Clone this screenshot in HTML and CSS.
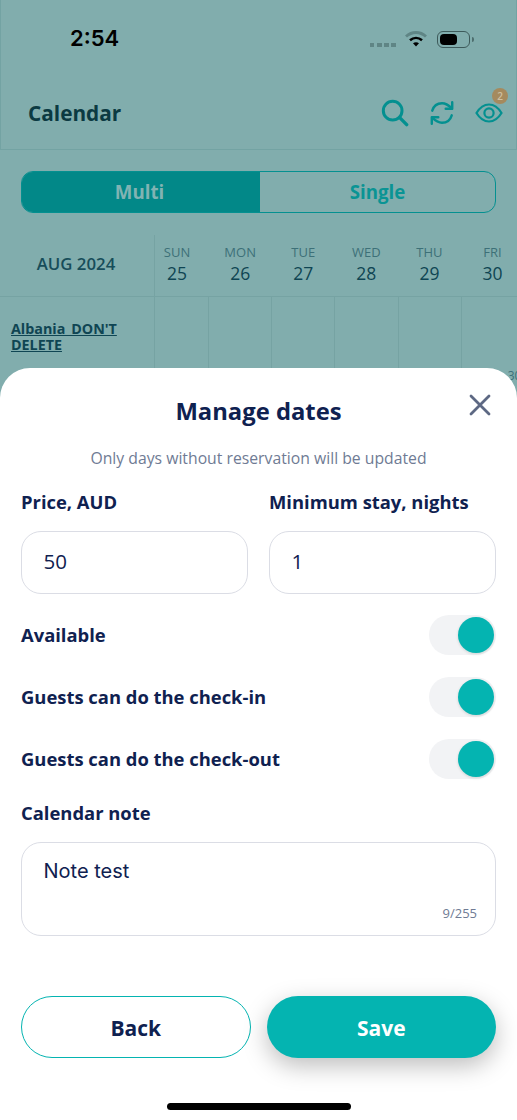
FILE: index.html
```html
<!DOCTYPE html>
<html lang="en">
<head>
<meta charset="utf-8">
<title>Manage dates</title>
<link rel="stylesheet" href="styles.css">
</head>
<body>
<div class="screen">
  <header class="top">
    <div class="status">
      <span class="time">2:54</span>
      <div class="status-icons">
        <span class="signal"><i></i><i></i><i></i><i></i></span>
        <svg class="wifi" viewBox="0 0 24 18" width="24" height="18"><path d="M2 6.5C8 1.2 16 1.2 22 6.5" fill="none" stroke="#5f8585" stroke-width="3"/><path d="M6 10.2C9.6 7.2 14.4 7.2 18 10.2" fill="none" stroke="#000" stroke-width="2.6"/><path d="M9 13.2C10.8 11.8 13.2 11.8 15 13.2L12 16.5Z" fill="#000"/></svg>
        <span class="battery"><span class="charge"></span></span><span class="nub"></span>
      </div>
    </div>
    <div class="nav">
      <h1>Calendar</h1>
      <div class="nav-icons">
        <svg viewBox="0 0 30 30" width="28" height="28"><circle cx="12.5" cy="12.5" r="10" fill="none" stroke="#049090" stroke-width="3.2"/><path d="M20 20L27.5 27.5" stroke="#049090" stroke-width="3.6" stroke-linecap="round"/></svg>
        <svg viewBox="0 0 28 28" width="26" height="26" fill="none" stroke="#049090" stroke-width="2.6" stroke-linecap="round" stroke-linejoin="round"><path d="M3.5 11.5C5 6.5 9 3.5 14 3.5C18 3.5 21 5.5 24.5 9"/><path d="M25 2.5V9.5H18"/><path d="M24.5 16.5C23 21.5 19 24.5 14 24.5C10 24.5 7 22.5 3.5 19"/><path d="M3 25.5V18.5H10"/></svg>
        <span class="eye">
          <svg viewBox="0 0 28 20" width="28" height="20" fill="none" stroke="#049090" stroke-width="2.2"><path d="M1.5 10C5 4.2 9.2 1.5 14 1.5C18.8 1.5 23 4.2 26.5 10C23 15.8 18.8 18.5 14 18.5C9.2 18.5 5 15.8 1.5 10Z"/><circle cx="14" cy="10" r="4.6"/></svg>
          <b class="badge">2</b>
        </span>
      </div>
    </div>
  </header>

  <div class="segment">
    <span class="seg-on">Multi</span>
    <span class="seg-off">Single</span>
  </div>

  <div class="cal-head">
    <div class="month">AUG 2024</div>
    <div class="days">
      <div class="day"><span>SUN</span><strong>25</strong></div>
      <div class="day"><span>MON</span><strong>26</strong></div>
      <div class="day"><span>TUE</span><strong>27</strong></div>
      <div class="day"><span>WED</span><strong>28</strong></div>
      <div class="day"><span>THU</span><strong>29</strong></div>
      <div class="day"><span>FRI</span><strong>30</strong></div>
    </div>
  </div>
  <div class="cal-row">
    <a class="listing">Albania_DON'T DELETE</a>
    <div class="cell c1"></div>
    <div class="cell"></div>
    <div class="cell"></div>
    <div class="cell"></div>
    <div class="cell"></div>
    <div class="cell last"><span class="peek">30</span></div>
  </div>

  <section class="sheet">
    <h2>Manage dates</h2>
    <svg class="close" viewBox="0 0 22 22" width="22" height="22"><path d="M2 2L20 20M20 2L2 20" stroke="#5d6883" stroke-width="2.8" stroke-linecap="round"/></svg>
    <p class="sub">Only days without reservation will be updated</p>

    <div class="fields">
      <div class="field">
        <label class="label">Price, AUD</label>
        <div class="input">50</div>
      </div>
      <div class="field">
        <label class="label">Minimum stay, nights</label>
        <div class="input">1</div>
      </div>
    </div>

    <div class="toggle-row first"><span class="label">Available</span><span class="toggle"><i></i></span></div>
    <div class="toggle-row"><span class="label">Guests can do the check-in</span><span class="toggle"><i></i></span></div>
    <div class="toggle-row"><span class="label">Guests can do the check-out</span><span class="toggle"><i></i></span></div>

    <div class="label note-label">Calendar note</div>
    <div class="note">
      <span class="note-text">Note test</span>
      <span class="count">9/255</span>
    </div>

    <div class="actions">
      <button class="btn back">Back</button>
      <button class="btn save">Save</button>
    </div>
    <div class="home"></div>
  </section>
</div>
</body>
</html>
```

FILE: styles.css
```css
* { box-sizing: border-box; }
html, body { margin: 0; padding: 0; }
body { font-family: "Open Sans", "Noto Sans", sans-serif; color: #0f2150; }
.screen { position: relative; width: 517px; height: 1120px; background: #81adad; overflow: hidden; }

.top { height: 150px; border: 1px solid #73a3a3; border-top: 0; }
.status { height: 76px; display: flex; justify-content: space-between; align-items: flex-start; }
.time { margin: 24px 0 0 69px; font: 600 22px/28px Inter, "Liberation Sans", sans-serif; color: #000; }
.status-icons { display: flex; align-items: center; margin: 30px 42px 0 0; }
.signal { display: flex; gap: 2.6px; margin: 12px 8px 0 0; }
.signal i { width: 4.6px; height: 4px; background: #5f8585; }
.wifi { margin-right: 9px; }
.battery { width: 33px; height: 17px; border: 1px solid #3d5a5a; border-radius: 6px; padding: 2px; display: block; }
.charge { display: block; width: 17px; height: 11px; background: #000; border-radius: 4px; }
.nub { width: 2px; height: 5px; background: #4d6e6e; margin-left: 2px; border-radius: 0 2px 2px 0; }

.nav { display: flex; justify-content: space-between; align-items: center; height: 73px; padding: 0 14px 0 27px; }
h1 { margin: 0; font-size: 20.8px; font-weight: 700; color: #0b3a42; }
.nav-icons { display: flex; align-items: center; gap: 20px; }
.eye { position: relative; display: block; width: 27px; height: 20px; }
.badge { position: absolute; top: -15px; left: 17px; width: 16px; height: 16px; border-radius: 50%; background: #a58a5e; color: #cfc0a2; font: 600 10px/16px "Open Sans", sans-serif; text-align: center; }

.segment { display: flex; height: 42px; margin: 21px 21px 0; border-radius: 12px; border: 1px solid #049090; overflow: hidden; font-size: 18.7px; line-height: 24px; font-weight: 700; }
.segment span { display: flex; align-items: center; justify-content: center; padding-bottom: 1px; }
.seg-on { width: 238px; padding-right: 3px; background: #028888; color: #81b3b3; }
.seg-off { flex: 1; color: #0a9494; }

.cal-head { display: flex; height: 62px; margin-top: 22px; border-bottom: 1px solid #76a3a3; }
.month { width: 155px; flex: none; border-right: 1px solid #76a3a3; display: flex; align-items: center; justify-content: center; font-size: 16.8px; font-weight: 600; color: #174d5a; padding: 0 2px 5px 0; }
.days { display: flex; margin-left: -9.5px; flex: none; }
.day { width: 63.1px; display: flex; flex-direction: column; align-items: center; padding-top: 8px; }
.day span { font-size: 13px; line-height: 19px; color: #3d7078; }
.day strong { font-size: 17.5px; line-height: 23px; font-weight: 500; color: #0f4553; }

.cal-row { display: flex; height: 100px; }
.listing { display: block; flex: none; width: 154px; padding: 24px 30px 0 11px; font-size: 14.3px; line-height: 16px; font-weight: 700; color: #0f4553; text-decoration: underline; }
.cell { width: 63.2px; border-left: 1px solid #76a3a3; position: relative; }
.c1 { width: 54px; }
.cell.last { flex: 1; overflow: hidden; }
.peek { position: absolute; top: 70px; left: 46px; font-size: 12px; color: #3d7078; }

.sheet { position: absolute; left: 0; top: 368px; width: 517px; height: 752px; background: #fff; border-radius: 30px 30px 0 0; padding: 0 21px; }
h2 { margin: 25px 0 0; text-align: center; font-size: 23.8px; line-height: 36px; font-weight: 700; color: #0f2150; }
.close { position: absolute; top: 26px; right: 26px; }
.sub { margin: 18px 0 0; text-align: center; font-size: 15.75px; line-height: 22px; color: #6f7b94; }
.label { font-size: 18.4px; line-height: 24px; font-weight: 700; color: #0f2150; }
.fields { display: flex; gap: 21px; margin-top: 21px; }
.field { flex: 1; min-width: 0; }
.field .label { display: block; white-space: nowrap; }
.input { height: 63px; margin-top: 17px; border: 1.5px solid #dbdde5; border-radius: 20px; padding: 0 0 3px 21.5px; display: flex; align-items: center; font-size: 20.5px; color: #0f2150; }
.toggle-row { display: flex; justify-content: space-between; align-items: center; height: 40px; margin-top: 22px; }
.toggle-row.first { margin-top: 21px; }
.toggle { width: 67px; height: 40px; border-radius: 20px; background: #f2f3f5; display: flex; align-items: center; justify-content: flex-end; padding-right: 2px; }
.toggle i { width: 36px; height: 36px; border-radius: 50%; background: #04b4b1; box-shadow: 0 1px 3px rgba(0,0,0,.14); }
.note-label { margin-top: 22px; }
.note { position: relative; height: 94px; margin-top: 17px; border: 1.5px solid #dbdde5; border-radius: 20px; padding: 13px 21.5px; font: 400 20px/30px Inter, "Liberation Sans", sans-serif; color: #0f2150; }
.note-text { display: block; font-size: 20px; }
.count { position: absolute; right: 18px; bottom: 14px; font: 400 13px/16px "Open Sans", sans-serif; color: #6f7b94; }
.actions { display: flex; gap: 16px; margin-top: 60px; }
.btn { flex: 0 0 calc(50% - 8px); height: 62px; padding: 1px 0 0; border-radius: 31px; font: 700 21px "Open Sans", sans-serif; }
.back { background: #fff; border: 1.7px solid #04b4b1; color: #0f2150; }
.save { background: #04b4b1; border: 0; color: #fff; box-shadow: 0 8px 24px rgba(0,0,0,.26); }
.home { width: 184px; height: 7px; border-radius: 4px; background: #000; margin: 45px auto 0 146px; }
```
